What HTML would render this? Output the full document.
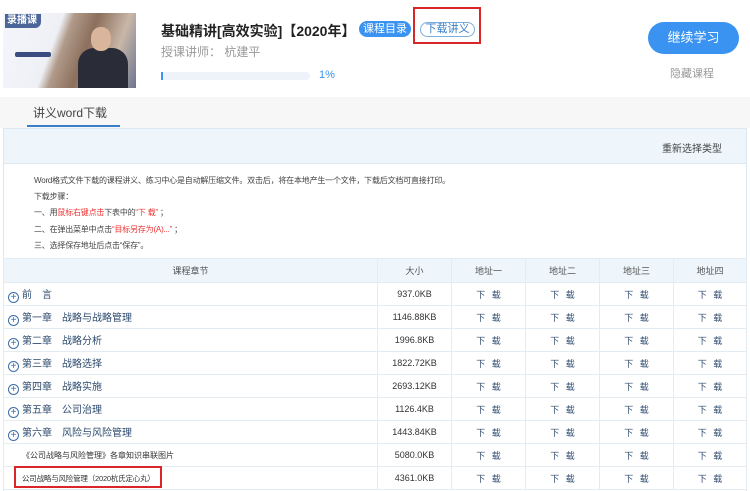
<!DOCTYPE html>
<html><head><meta charset="utf-8"><style>
*{margin:0;padding:0;box-sizing:border-box}
body{width:750px;height:491px;overflow:hidden;background:#fff;font-family:"Liberation Sans","Noto Sans CJK SC",sans-serif;position:relative;color:#333}
.a{position:absolute;white-space:nowrap}
table{position:absolute;left:3px;top:258px;width:744px;border-collapse:collapse;font-size:9px;color:#333}
td{border:1px solid #e3ecf3;height:23px;text-align:center}
tr.h td{background:#eef6fc;height:24px;color:#555}
td.c{text-align:left;padding-left:4px;font-size:10px;color:#2d4a6e}
.p{display:inline-block;width:11px;height:11px;border:1px solid #3a6ea8;border-radius:50%;font-size:10px;line-height:9px;text-align:center;color:#3a6ea8;vertical-align:-2px;margin-right:3px}
.dl{color:#2d4a6e;word-spacing:4px}
</style></head><body>
<div class="a" style="left:3px;top:13px;width:133px;height:75px;background:linear-gradient(110deg,#f4f6fb 0%,#eef0f6 38%,#b09a8a 45%,#8c6f5c 60%,#c9b7a8 80%,#6c7590 100%);overflow:hidden">
 <div class="a" style="left:2px;top:1px;width:36px;height:14px;background:#4c6699;border-radius:0 0 6px 0;color:#fff;font-size:10px;font-weight:bold;line-height:14px;padding-left:2px">录播课</div>
 <div class="a" style="left:12px;top:39px;width:36px;height:5px;background:#3a4c80;border-radius:2px"></div>
 <div class="a" style="left:75px;top:35px;width:50px;height:40px;background:#2a2d38;border-radius:16px 16px 0 0"></div>
 <div class="a" style="left:88px;top:14px;width:20px;height:24px;background:#d9b59b;border-radius:45%"></div>
</div>
<div class="a" style="left:161px;top:21px;font-size:14px;font-weight:bold;color:#222">基础精讲[高效实验]【2020年】</div>
<div class="a" style="left:359px;top:21px;width:52px;height:16px;background:#3a93f0;border-radius:8px;color:#fff;font-size:11px;line-height:16px;text-align:center">课程目录</div>
<div class="a" style="left:413px;top:7px;width:68px;height:37px;border:2px solid #d9262a"></div>
<div class="a" style="left:420px;top:22px;width:55px;height:15px;border:1px solid #7aaedf;border-radius:8px;color:#3a7fc8;font-size:11px;line-height:13px;text-align:center">下载讲义</div>
<div class="a" style="left:161px;top:43px;font-size:12px;color:#999">授课讲师： 杭建平</div>
<div class="a" style="left:161px;top:72px;width:149px;height:8px;background:#eef3f9;border-radius:4px"><div style="width:2px;height:8px;background:#3a93f0"></div></div>
<div class="a" style="left:319px;top:69px;font-size:11px;color:#3a93f0">1%</div>
<div class="a" style="left:648px;top:22px;width:91px;height:32px;background:#3a93f0;border-radius:16px;color:#fff;font-size:13px;line-height:32px;text-align:center">继续学习</div>
<div class="a" style="left:670px;top:65px;font-size:11px;color:#999">隐藏课程</div>
<div class="a" style="left:0;top:97px;width:750px;height:31px;background:#f7f7f7"></div>
<div class="a" style="left:33px;top:104px;font-size:12px;color:#444">讲义word下载</div>
<div class="a" style="left:27px;top:125px;width:93px;height:2px;background:#3a7fc8"></div>
<div class="a" style="left:3px;top:128px;width:744px;height:363px;border:1px solid #dbe8f2;border-bottom:none"></div>
<div class="a" style="left:4px;top:129px;width:742px;height:35px;background:#eef6fc;border-bottom:1px solid #dbe8f2"></div>
<div class="a" style="left:662px;top:140px;font-size:10px;color:#444">重新选择类型</div>
<div class="a" style="left:34px;top:173px;font-size:8px;letter-spacing:-0.2px;color:#444;line-height:16.2px">Word格式文件下载的课程讲义、练习中心是自动解压缩文件。双击后，将在本地产生一个文件，下载后文档可直接打印。<br>下载步骤：<br>一、用<span style="color:#e33">鼠标右键点击</span>下表中的<span style="color:#e33">“下 载”</span> ；<br>二、在弹出菜单中点击<span style="color:#e33">“目标另存为(A)...”</span> ；<br>三、选择保存地址后点击“保存”。</div>
<table>
<tr class="h"><td style="width:374px">课程章节</td><td style="width:74px">大小</td><td style="width:74px">地址一</td><td style="width:74px">地址二</td><td style="width:74px">地址三</td><td>地址四</td></tr>
<tr><td class="c"><span class="p">+</span>前　言</td><td>937.0KB</td><td class="dl">下 载</td><td class="dl">下 载</td><td class="dl">下 载</td><td class="dl">下 载</td></tr>
<tr><td class="c"><span class="p">+</span>第一章　战略与战略管理</td><td>1146.88KB</td><td class="dl">下 载</td><td class="dl">下 载</td><td class="dl">下 载</td><td class="dl">下 载</td></tr>
<tr><td class="c"><span class="p">+</span>第二章　战略分析</td><td>1996.8KB</td><td class="dl">下 载</td><td class="dl">下 载</td><td class="dl">下 载</td><td class="dl">下 载</td></tr>
<tr><td class="c"><span class="p">+</span>第三章　战略选择</td><td>1822.72KB</td><td class="dl">下 载</td><td class="dl">下 载</td><td class="dl">下 载</td><td class="dl">下 载</td></tr>
<tr><td class="c"><span class="p">+</span>第四章　战略实施</td><td>2693.12KB</td><td class="dl">下 载</td><td class="dl">下 载</td><td class="dl">下 载</td><td class="dl">下 载</td></tr>
<tr><td class="c"><span class="p">+</span>第五章　公司治理</td><td>1126.4KB</td><td class="dl">下 载</td><td class="dl">下 载</td><td class="dl">下 载</td><td class="dl">下 载</td></tr>
<tr><td class="c"><span class="p">+</span>第六章　风险与风险管理</td><td>1443.84KB</td><td class="dl">下 载</td><td class="dl">下 载</td><td class="dl">下 载</td><td class="dl">下 载</td></tr>
<tr><td class="c" style="padding-left:18px;font-size:8px;color:#333">《公司战略与风险管理》各章知识串联图片</td><td>5080.0KB</td><td class="dl">下 载</td><td class="dl">下 载</td><td class="dl">下 载</td><td class="dl">下 载</td></tr>
<tr><td class="c" style="padding-left:18px;font-size:7.5px;letter-spacing:-0.2px;color:#333">公司战略与风险管理（2020杭氏定心丸）</td><td>4361.0KB</td><td class="dl">下 载</td><td class="dl">下 载</td><td class="dl">下 载</td><td class="dl">下 载</td></tr>
</table>
<div class="a" style="left:14px;top:466px;width:148px;height:22px;border:2px solid #d9262a"></div>
</body></html>
